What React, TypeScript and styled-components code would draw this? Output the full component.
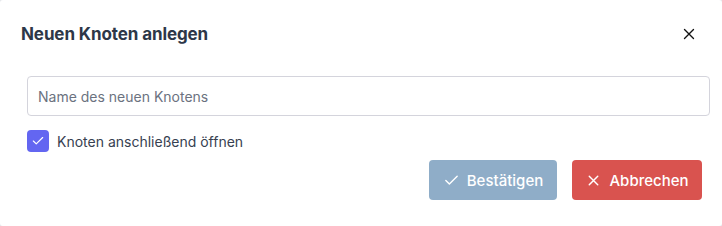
import React, { useState } from 'react';
import styled, { createGlobalStyle } from 'styled-components';

const GlobalStyle = createGlobalStyle`
    html, body {
        margin: 0;
        padding: 0;
        background: #e5e7eb;
    }
    body {
        font-family: Inter, "Noto Sans", sans-serif;
    }
    * {
        box-sizing: border-box;
    }
`;

const CheckIcon = ({ size = 14 }: { size?: number }) => (
    <svg width={size} height={size} viewBox="0 0 24 24" fill="none" stroke="currentColor" strokeWidth={2} strokeLinecap="round" strokeLinejoin="round">
        <path d="M20 6 9 17l-5-5" />
    </svg>
);

const CrossIcon = ({ size = 14, width = 2 }: { size?: number; width?: number }) => (
    <svg width={size} height={size} viewBox="0 0 24 24" fill="none" stroke="currentColor" strokeWidth={width} strokeLinecap="round">
        <path d="M18 6 6 18M6 6l12 12" />
    </svg>
);

const App: React.FC = () => {
    const [openAfter, setOpenAfter] = useState(true);
    const [name, setName] = useState('');

    return (
        <>
            <GlobalStyle />
            <Dialog>
                <Header>
                    <Title>Neuen Knoten anlegen</Title>
                    <CloseButton aria-label="Schließen">
                        <CrossIcon size={18} width={1.8} />
                    </CloseButton>
                </Header>

                <Body>
                    <NameInput
                        placeholder="Name des neuen Knotens"
                        value={name}
                        onChange={(e) => setName(e.target.value)}
                    />
                    <CheckRow onClick={() => setOpenAfter(!openAfter)}>
                        <CheckBox checked={openAfter}>
                            {openAfter && <CheckIcon size={14} />}
                        </CheckBox>
                        <CheckLabel>Knoten anschließend öffnen</CheckLabel>
                    </CheckRow>
                </Body>

                <Footer>
                    <Button variant="confirm" width={128} disabled={!name}>
                        <CheckIcon size={17} />
                        Bestätigen
                    </Button>
                    <Button variant="cancel" width={130}>
                        <CrossIcon size={17} />
                        Abbrechen
                    </Button>
                </Footer>
            </Dialog>
        </>
    );
};

export default App;

const Dialog = styled.div`
    width: 722px;
    height: 226px;
    background: #ffffff;
    border-radius: 3px;
    display: flex;
    flex-direction: column;
`;

const Header = styled.div`
    display: flex;
    align-items: center;
    justify-content: space-between;
    padding: 0 24px 0 21px;
    height: 68px;
    margin-bottom: 8px;
`;

const Title = styled.h2`
    margin: 0;
    font-size: 17px;
    font-weight: 700;
    color: #2d3748;
    letter-spacing: -0.1px;
`;

const CloseButton = styled.button`
    border: none;
    background: none;
    padding: 0;
    color: #111111;
    display: flex;
    cursor: pointer;
`;

const Body = styled.div`
    padding: 0 12px 0 27px;
    display: flex;
    flex-direction: column;
    gap: 14px;
`;

const NameInput = styled.input`
    width: 100%;
    height: 40px;
    border: 1px solid #d4d4dc;
    border-radius: 4px;
    padding: 0 10px;
    font-family: inherit;
    font-size: 14px;
    color: #374151;
    outline: none;
    &::placeholder {
        color: #6b7280;
    }
`;

const CheckRow = styled.label`
    display: flex;
    align-items: center;
    gap: 8px;
    cursor: pointer;
`;

const CheckBox = styled.span<{ checked: boolean }>`
    width: 22px;
    height: 22px;
    border-radius: 4px;
    background: ${(p) => (p.checked ? '#6366f1' : '#ffffff')};
    border: ${(p) => (p.checked ? 'none' : '1px solid #d4d4dc')};
    color: #ffffff;
    display: flex;
    align-items: center;
    justify-content: center;
`;

const CheckLabel = styled.span`
    font-size: 14px;
    color: #374151;
`;

const Footer = styled.div`
    display: flex;
    justify-content: flex-end;
    gap: 15px;
    padding: 8px 20px 0 0;
`;

const Button = styled.button<{ variant: 'confirm' | 'cancel'; width: number }>`
    width: ${(p) => p.width}px;
    height: 40px;
    padding: 0;
    border: none;
    border-radius: 4px;
    display: flex;
    align-items: center;
    justify-content: center;
    gap: 7px;
    font-family: inherit;
    font-size: 15px;
    font-weight: 500;
    color: #ffffff;
    background: ${(p) => (p.variant === 'confirm' ? '#8fadc8' : '#d9534f')};
    cursor: pointer;
    &:disabled {
        cursor: default;
    }
`;
